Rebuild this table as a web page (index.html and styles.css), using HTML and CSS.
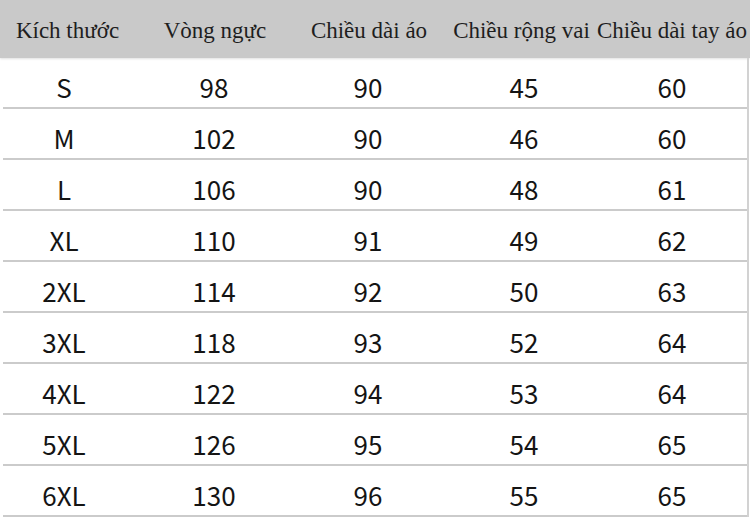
FILE: index.html
```html
<!DOCTYPE html>
<html lang="vi">
<head>
<meta charset="utf-8">
<title>Bảng kích thước</title>
<link rel="stylesheet" href="styles.css">
</head>
<body>
<div class="sheet">
  <div class="head">
    <div class="cell">Kích thước</div>
    <div class="cell">Vòng ngực</div>
    <div class="cell">Chiều dài áo</div>
    <div class="cell">Chiều rộng vai</div>
    <div class="cell">Chiều dài tay áo</div>
  </div>
  <div class="body">
    <div class="row"><div class="cell">S</div><div class="cell">98</div><div class="cell">90</div><div class="cell">45</div><div class="cell">60</div></div>
    <div class="row"><div class="cell">M</div><div class="cell">102</div><div class="cell">90</div><div class="cell">46</div><div class="cell">60</div></div>
    <div class="row"><div class="cell">L</div><div class="cell">106</div><div class="cell">90</div><div class="cell">48</div><div class="cell">61</div></div>
    <div class="row"><div class="cell">XL</div><div class="cell">110</div><div class="cell">91</div><div class="cell">49</div><div class="cell">62</div></div>
    <div class="row"><div class="cell">2XL</div><div class="cell">114</div><div class="cell">92</div><div class="cell">50</div><div class="cell">63</div></div>
    <div class="row"><div class="cell">3XL</div><div class="cell">118</div><div class="cell">93</div><div class="cell">52</div><div class="cell">64</div></div>
    <div class="row"><div class="cell">4XL</div><div class="cell">122</div><div class="cell">94</div><div class="cell">53</div><div class="cell">64</div></div>
    <div class="row"><div class="cell">5XL</div><div class="cell">126</div><div class="cell">95</div><div class="cell">54</div><div class="cell">65</div></div>
    <div class="row"><div class="cell">6XL</div><div class="cell">130</div><div class="cell">96</div><div class="cell">55</div><div class="cell">65</div></div>
  </div>
</div>
</body>
</html>
```
FILE: styles.css
```css
html, body {
  margin: 0;
  padding: 0;
  background: #ffffff;
}

.sheet {
  width: 750px;
  height: 519px;
  overflow: hidden;
}

.head {
  display: grid;
  grid-template-columns: 135px 160px 148px 157px 144px;
  height: 58px;
  background: #c9c9c9;
  box-shadow: 0 1px 2px rgba(0, 0, 0, 0.12);
  font-family: "Liberation Serif", "Times New Roman", serif;
  font-size: 23px;
  color: #1e1e1e;
}

.head .cell {
  display: flex;
  align-items: center;
  justify-content: center;
  white-space: nowrap;
  padding-top: 4px;
}

.body {
  width: 744px;
  margin-left: 3px;
  border-right: 2px solid #d2d2d2;
}

.row {
  display: grid;
  grid-template-columns: 122px 178px 130px 182px 114px;
  height: 49px;
  border-bottom: 2px solid #cbcbcb;
  font-family: "Noto Sans CJK SC", "Noto Sans", sans-serif;
  font-size: 26px;
  color: #141414;
}

.row .cell {
  display: flex;
  align-items: center;
  justify-content: center;
  padding-top: 8px;
  white-space: nowrap;
}
```
